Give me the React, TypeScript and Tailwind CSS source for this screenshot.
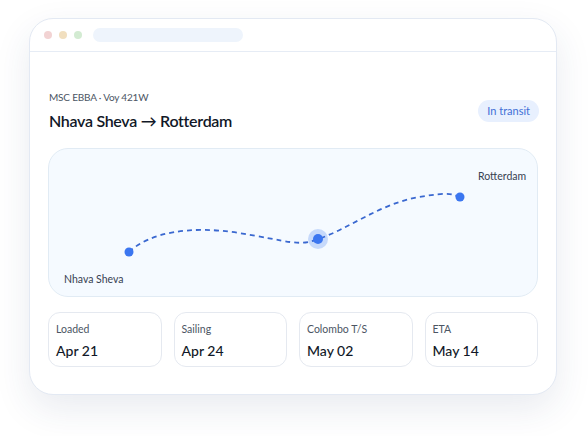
import React from "react";

const stats = [
  { label: "Loaded", value: "Apr 21" },
  { label: "Sailing", value: "Apr 24" },
  { label: "Colombo T/S", value: "May 02" },
  { label: "ETA", value: "May 14" },
];

export default function App() {
  return (
    <div
      className="w-[588px] h-[436px] bg-white pt-[18px] pl-[29px]"
      style={{ fontFamily: 'Lato, "Noto Sans", "Liberation Sans", sans-serif' }}
    >
      <div className="w-[528px] h-[377px] rounded-[24px] border border-[#e3e9f3] bg-white shadow-[0_14px_36px_rgba(40,60,110,0.10)] overflow-hidden flex flex-col">
        <div className="h-[33px] shrink-0 border-b border-[#e6ecf5] flex items-center pl-[14px]">
          <div className="flex gap-[7px]">
            <div className="w-[8px] h-[8px] rounded-full bg-[#f2d3d3]" />
            <div className="w-[8px] h-[8px] rounded-full bg-[#f1dfbf]" />
            <div className="w-[8px] h-[8px] rounded-full bg-[#d3ebd2]" />
          </div>
          <div className="ml-[11px] w-[150px] h-[14px] rounded-full bg-[#eef4fc]" />
        </div>
        <div className="px-[18px] pt-[38px] flex flex-col">
          <div className="flex items-start justify-between">
            <div className="flex flex-col">
              <div className="text-[10px] leading-[14px] tracking-[-0.2px] text-[#4b5563] ml-[1px]">MSC EBBA · Voy 421W</div>
              <div className="mt-[7px] text-[16px] leading-[20px] tracking-[-0.3px] font-semibold text-[#111827] ml-[1px]">
                Nhava Sheva → Rotterdam
              </div>
            </div>
            <div className="mt-[10px] mr-[-1px] h-[22px] px-[9px] rounded-full bg-[#e8f0fe] text-[#3f6fd6] text-[11px] flex items-center">
              In transit
            </div>
          </div>
          <div className="relative mt-[17px] h-[149px] rounded-[20px] border border-[#e1ebf4] bg-[#f5faff]">
            <svg className="absolute inset-0" width="492" height="149" viewBox="0 0 492 149">
              <path
                d="M80 103 C 100 84, 140 76, 190 84 S 250 98, 269 90 C 300 80, 330 55, 370 48 S 405 48, 411 48"
                fill="none"
                stroke="#3a68d0"
                strokeWidth="1.8"
                strokeDasharray="5 4"
              />
              <circle cx="80" cy="103" r="4.5" fill="#3b76f0" />
              <circle cx="269" cy="90" r="10" fill="#3b76f0" fillOpacity="0.25" />
              <circle cx="269" cy="90" r="5" fill="#3b76f0" />
              <circle cx="411" cy="48" r="4.5" fill="#3b76f0" />
            </svg>
            <div className="absolute left-[429px] top-[20px] text-[10.5px] leading-[14px] text-[#374151]">Rotterdam</div>
            <div className="absolute left-[15px] top-[123px] text-[10.5px] leading-[14px] text-[#374151]">Nhava Sheva</div>
          </div>
          <div className="mt-[15px] grid grid-cols-4 gap-[12px]">
            {stats.map((s) => (
              <div
                key={s.label}
                className="h-[55px] rounded-[12px] border border-[#e5e9f0] bg-white px-[7px] pt-[9px] flex flex-col"
              >
                <div className="text-[10.5px] leading-[14px] text-[#4b5563]">{s.label}</div>
                <div className="mt-[6px] text-[14px] leading-[18px] font-medium text-[#111827]">{s.value}</div>
              </div>
            ))}
          </div>
        </div>
      </div>
    </div>
  );
}
